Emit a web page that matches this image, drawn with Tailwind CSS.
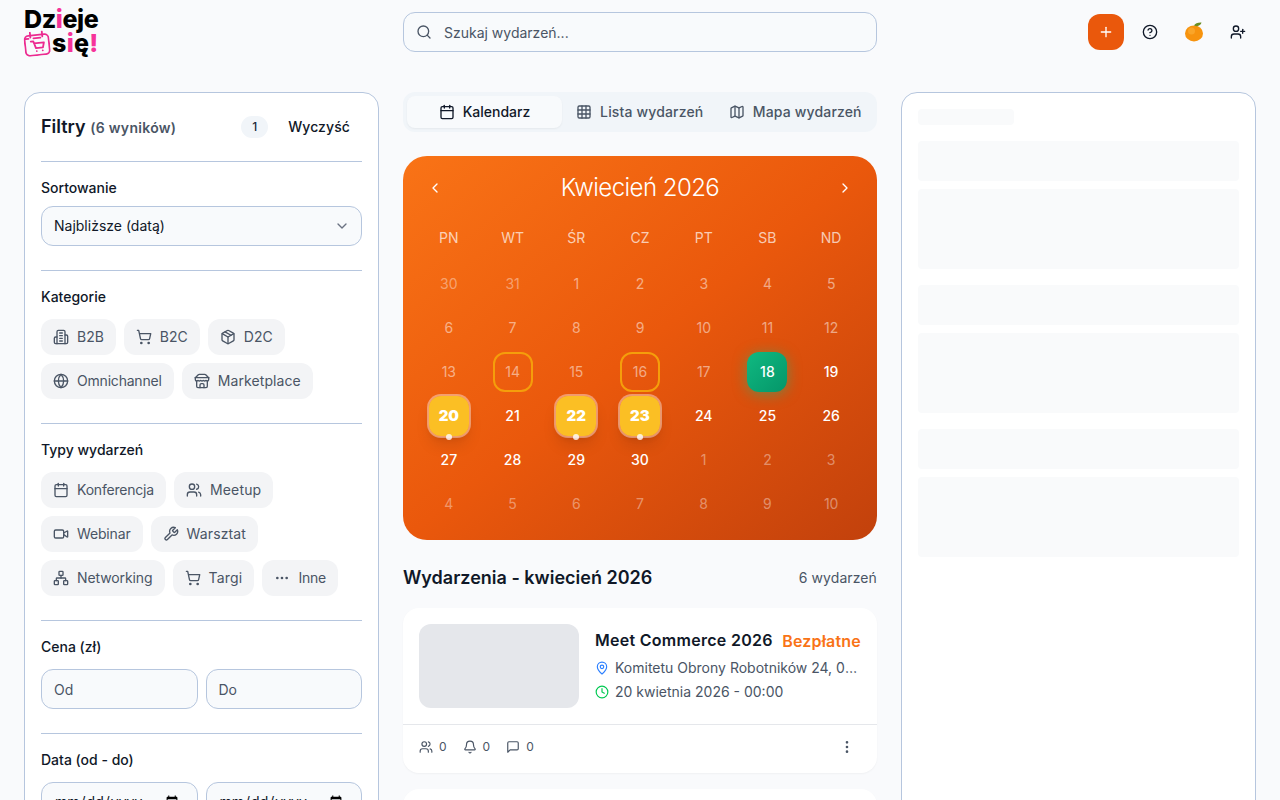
<!DOCTYPE html>
<html lang="pl">
<head>
    <meta charset="UTF-8">
    <meta name="viewport" content="width=device-width, initial-scale=1.0">
    <title>Dzieje się!</title>
    <script src="https://cdn.jsdelivr.net/npm/@tailwindcss/browser@4"></script>
</head>
<body class="h-screen overflow-hidden bg-[#f9fafc] font-['Inter',sans-serif] text-gray-900 antialiased">

    <!-- header -->
    <header class="grid grid-cols-[355px_474px_355px] gap-6 px-6 h-[64px]">
        <a class="flex flex-col pt-[8px] w-[76px]">
            <span class="text-[25px] leading-[22px] font-extrabold tracking-[-0.4px] text-black">Dz<span class="text-pink-500">i</span>eje</span>
            <span class="flex items-start gap-[2px] mt-[1px]">
                <svg class="w-[26px] h-[25px] -rotate-6" viewBox="0 0 26 25" fill="none" stroke="#ec2a90" stroke-width="1.8" stroke-linecap="round" stroke-linejoin="round"><rect x="1" y="4" width="24" height="20" rx="4"/><path d="M7 1v5M19 1v5M2 7h3M10 7h7"/><path d="M7 10h2.5l2 7h7l1.5-5H10M12 20h.01M18 20h.01"/></svg>
                <span class="text-[25px] leading-[24px] font-extrabold tracking-[0.3px] text-black">s<span class="text-pink-500">i</span>ę<span class="text-pink-500">!</span></span>
            </span>
        </a>
        <div class="pt-3">
            <div class="flex items-center gap-3 h-10 px-3 rounded-xl border border-[#b6c6de] bg-[#f8fafc]">
                <svg class="w-4 h-4 text-gray-600" viewBox="0 0 24 24" fill="none" stroke="currentColor" stroke-width="2" stroke-linecap="round" stroke-linejoin="round"><circle cx="11" cy="11" r="8"/><path d="m21 21-4.3-4.3"/></svg>
                <input class="flex-1 pt-[2px] bg-transparent text-sm outline-none placeholder:text-gray-600" placeholder="Szukaj wydarzeń...">
            </div>
        </div>
        <div class="flex items-start justify-end pt-[14px]">
            <button class="flex items-center justify-center w-9 h-9 rounded-xl bg-[#ea580c] text-white">
                <svg class="w-4 h-4" viewBox="0 0 24 24" fill="none" stroke="currentColor" stroke-width="2" stroke-linecap="round" stroke-linejoin="round"><path d="M5 12h14"/><path d="M12 5v14"/></svg>
            </button>
            <button class="flex items-center justify-center w-9 h-9 ml-2">
                <svg class="w-4 h-4" viewBox="0 0 24 24" fill="none" stroke="currentColor" stroke-width="2" stroke-linecap="round" stroke-linejoin="round"><circle cx="12" cy="12" r="10"/><path d="M9.09 9a3 3 0 0 1 5.83 1c0 2-3 3-3 3"/><path d="M12 17h.01"/></svg>
            </button>
            <button class="flex items-center justify-center w-9 h-9 ml-2">
                <svg class="w-5 h-5" viewBox="0 0 20 20"><ellipse cx="10" cy="11.4" rx="9" ry="8" fill="#f7930e"/><circle cx="7.5" cy="9" r="3.5" fill="#fbb03b" opacity=".6"/><path d="M10 3.6C11 1.4 14 .4 17.5 .6 16.8 3.6 13.8 5 10 3.6z" fill="#6b8e23"/></svg>
            </button>
            <button class="flex items-center justify-center w-9 h-9 ml-2">
                <svg class="w-4 h-4" viewBox="0 0 24 24" fill="none" stroke="currentColor" stroke-width="2" stroke-linecap="round" stroke-linejoin="round"><path d="M16 21v-2a4 4 0 0 0-4-4H6a4 4 0 0 0-4 4v2"/><circle cx="9" cy="7" r="4"/><path d="M19 8v6"/><path d="M22 11h-6"/></svg>
            </button>
        </div>
    </header>

    <main class="grid grid-cols-[355px_474px_355px] gap-6 px-6 pt-7 items-start">

        <!-- filters -->
        <aside class="bg-white rounded-2xl border border-[#b6c6de] px-4 pt-4 pb-6">
            <div class="flex items-center h-9">
                <h2 class="text-lg leading-7 font-semibold">Filtry <span class="text-sm font-semibold tracking-[0.3px] text-gray-600">(6 wyników)</span></h2>
                <span class="ml-auto flex items-center justify-center w-[27px] h-[22px] rounded-full bg-slate-100 text-xs font-medium text-gray-800">1</span>
                <button class="ml-2 px-3 text-sm font-medium tracking-[0.1px]">Wyczyść</button>
            </div>
            <div class="mt-4 border-t border-[#b6c6de] pt-4">
                <label class="block text-sm font-medium mb-2">Sortowanie</label>
                <div class="relative">
                    <select class="appearance-none w-full h-10 px-3 rounded-xl border border-[#b6c6de] bg-[#f8fafc] text-sm outline-none">
                        <option>Najbliższe (datą)</option>
                    </select>
                    <svg class="absolute right-3 top-3 w-4 h-4 text-gray-500" viewBox="0 0 24 24" fill="none" stroke="currentColor" stroke-width="2" stroke-linecap="round" stroke-linejoin="round"><path d="m6 9 6 6 6-6"/></svg>
                </div>
            </div>
            <div class="mt-6 border-t border-[#b6c6de] pt-4">
                <label class="block text-sm font-medium mb-3">Kategorie</label>
                <div class="flex flex-wrap gap-2">
                    <button class="flex items-center gap-2 h-9 px-3 rounded-xl bg-gray-100 text-sm text-gray-600">
                        <svg class="w-4 h-4" viewBox="0 0 24 24" fill="none" stroke="currentColor" stroke-width="2" stroke-linecap="round" stroke-linejoin="round"><path d="M6 22V4a2 2 0 0 1 2-2h8a2 2 0 0 1 2 2v18Z"/><path d="M6 12H4a2 2 0 0 0-2 2v6a2 2 0 0 0 2 2h2"/><path d="M18 9h2a2 2 0 0 1 2 2v9a2 2 0 0 1-2 2h-2"/><path d="M10 6h4"/><path d="M10 10h4"/><path d="M10 14h4"/><path d="M10 18h4"/></svg>
                        B2B
                    </button>
                    <button class="flex items-center gap-2 h-9 px-3 rounded-xl bg-gray-100 text-sm text-gray-600">
                        <svg class="w-4 h-4" viewBox="0 0 24 24" fill="none" stroke="currentColor" stroke-width="2" stroke-linecap="round" stroke-linejoin="round"><circle cx="8" cy="21" r="1"/><circle cx="19" cy="21" r="1"/><path d="M2.05 2.05h2l2.66 12.42a2 2 0 0 0 2 1.58h9.78a2 2 0 0 0 1.95-1.57l1.65-7.43H5.12"/></svg>
                        B2C
                    </button>
                    <button class="flex items-center gap-2 h-9 px-3 rounded-xl bg-gray-100 text-sm text-gray-600">
                        <svg class="w-4 h-4" viewBox="0 0 24 24" fill="none" stroke="currentColor" stroke-width="2" stroke-linecap="round" stroke-linejoin="round"><path d="M11 21.73a2 2 0 0 0 2 0l7-4A2 2 0 0 0 21 16V8a2 2 0 0 0-1-1.73l-7-4a2 2 0 0 0-2 0l-7 4A2 2 0 0 0 3 8v8a2 2 0 0 0 1 1.73z"/><path d="M12 22V12"/><path d="M3.29 7 12 12l8.71-5"/><path d="m7.5 4.27 9 5.15"/></svg>
                        D2C
                    </button>
                    <button class="flex items-center gap-2 h-9 px-3 rounded-xl bg-gray-100 text-sm tracking-[-0.2px] text-gray-600">
                        <svg class="w-4 h-4" viewBox="0 0 24 24" fill="none" stroke="currentColor" stroke-width="2" stroke-linecap="round" stroke-linejoin="round"><circle cx="12" cy="12" r="10"/><path d="M12 2a14.5 14.5 0 0 0 0 20 14.5 14.5 0 0 0 0-20"/><path d="M2 12h20"/></svg>
                        Omnichannel
                    </button>
                    <button class="flex items-center gap-2 h-9 px-3 rounded-xl bg-gray-100 text-sm tracking-[0.1px] text-gray-600">
                        <svg class="w-4 h-4" viewBox="0 0 24 24" fill="none" stroke="currentColor" stroke-width="2" stroke-linecap="round" stroke-linejoin="round"><path d="m2 7 4.41-4.41A2 2 0 0 1 7.83 2h8.34a2 2 0 0 1 1.42.59L22 7"/><path d="M4 12v8a2 2 0 0 0 2 2h12a2 2 0 0 0 2-2v-8"/><path d="M15 22v-4a2 2 0 0 0-2-2h-2a2 2 0 0 0-2 2v4"/><path d="M2 7h20"/><path d="M22 7v3a2 2 0 0 1-2 2a2.7 2.7 0 0 1-1.59-.63.7.7 0 0 0-.82 0A2.7 2.7 0 0 1 16 12a2.7 2.7 0 0 1-1.59-.63.7.7 0 0 0-.82 0A2.7 2.7 0 0 1 12 12a2.7 2.7 0 0 1-1.59-.63.7.7 0 0 0-.82 0A2.7 2.7 0 0 1 8 12a2.7 2.7 0 0 1-1.59-.63.7.7 0 0 0-.82 0A2.7 2.7 0 0 1 4 12a2 2 0 0 1-2-2V7"/></svg>
                        Marketplace
                    </button>
                </div>
            </div>
            <div class="mt-6 border-t border-[#b6c6de] pt-4">
                <label class="block text-sm font-medium mb-3">Typy wydarzeń</label>
                <div class="flex flex-wrap gap-2">
                    <button class="flex items-center gap-2 h-9 px-3 rounded-xl bg-gray-100 text-sm tracking-[-0.2px] text-gray-600">
                        <svg class="w-4 h-4" viewBox="0 0 24 24" fill="none" stroke="currentColor" stroke-width="2" stroke-linecap="round" stroke-linejoin="round"><path d="M8 2v4"/><path d="M16 2v4"/><rect x="3" y="4" width="18" height="18" rx="2"/><path d="M3 10h18"/></svg>
                        Konferencja
                    </button>
                    <button class="flex items-center gap-2 h-9 px-3 rounded-xl bg-gray-100 text-sm tracking-[0.15px] text-gray-600">
                        <svg class="w-4 h-4" viewBox="0 0 24 24" fill="none" stroke="currentColor" stroke-width="2" stroke-linecap="round" stroke-linejoin="round"><path d="M16 21v-2a4 4 0 0 0-4-4H6a4 4 0 0 0-4 4v2"/><circle cx="9" cy="7" r="4"/><path d="M22 21v-2a4 4 0 0 0-3-3.87"/><path d="M16 3.13a4 4 0 0 1 0 7.75"/></svg>
                        Meetup
                    </button>
                    <button class="flex items-center gap-2 h-9 px-3 rounded-xl bg-gray-100 text-sm tracking-[-0.15px] text-gray-600">
                        <svg class="w-4 h-4" viewBox="0 0 24 24" fill="none" stroke="currentColor" stroke-width="2" stroke-linecap="round" stroke-linejoin="round"><path d="m16 13 5.223 3.482a.5.5 0 0 0 .777-.416V7.87a.5.5 0 0 0-.752-.432L16 10.5"/><rect x="2" y="6" width="14" height="12" rx="2"/></svg>
                        Webinar
                    </button>
                    <button class="flex items-center gap-2 h-9 px-3 rounded-xl bg-gray-100 text-sm tracking-[0.12px] text-gray-600">
                        <svg class="w-4 h-4" viewBox="0 0 24 24" fill="none" stroke="currentColor" stroke-width="2" stroke-linecap="round" stroke-linejoin="round"><path d="M14.7 6.3a1 1 0 0 0 0 1.4l1.6 1.6a1 1 0 0 0 1.4 0l3.77-3.77a6 6 0 0 1-7.94 7.94l-6.91 6.91a2.12 2.12 0 0 1-3-3l6.91-6.91a6 6 0 0 1 7.94-7.94l-3.76 3.76z"/></svg>
                        Warsztat
                    </button>
                    <button class="flex items-center gap-2 h-9 px-3 rounded-xl bg-gray-100 text-sm tracking-[-0.1px] text-gray-600">
                        <svg class="w-4 h-4" viewBox="0 0 24 24" fill="none" stroke="currentColor" stroke-width="2" stroke-linecap="round" stroke-linejoin="round"><rect x="16" y="16" width="6" height="6" rx="1"/><rect x="2" y="16" width="6" height="6" rx="1"/><rect x="9" y="2" width="6" height="6" rx="1"/><path d="M5 16v-3a1 1 0 0 1 1-1h12a1 1 0 0 1 1 1v3"/><path d="M12 12V8"/></svg>
                        Networking
                    </button>
                    <button class="flex items-center gap-2 h-9 px-3 rounded-xl bg-gray-100 text-sm tracking-[0.2px] text-gray-600">
                        <svg class="w-4 h-4" viewBox="0 0 24 24" fill="none" stroke="currentColor" stroke-width="2" stroke-linecap="round" stroke-linejoin="round"><circle cx="8" cy="21" r="1"/><circle cx="19" cy="21" r="1"/><path d="M2.05 2.05h2l2.66 12.42a2 2 0 0 0 2 1.58h9.78a2 2 0 0 0 1.95-1.57l1.65-7.43H5.12"/></svg>
                        Targi
                    </button>
                    <button class="flex items-center gap-2 h-9 px-3 rounded-xl bg-gray-100 text-sm tracking-[-0.25px] text-gray-600">
                        <svg class="w-4 h-4" viewBox="0 0 24 24" fill="none" stroke="currentColor" stroke-width="2" stroke-linecap="round" stroke-linejoin="round"><circle cx="12" cy="12" r="1"/><circle cx="19" cy="12" r="1"/><circle cx="5" cy="12" r="1"/></svg>
                        Inne
                    </button>
                </div>
            </div>
            <div class="mt-6 border-t border-[#b6c6de] pt-4">
                <label class="block text-sm font-medium mb-3">Cena (zł)</label>
                <div class="grid grid-cols-2 gap-2">
                    <input class="w-full h-10 px-3 rounded-xl border border-[#b6c6de] bg-[#f8fafc] text-sm outline-none placeholder:text-gray-600" placeholder="Od">
                    <input class="w-full h-10 px-3 rounded-xl border border-[#b6c6de] bg-[#f8fafc] text-sm outline-none placeholder:text-gray-600" placeholder="Do">
                </div>
            </div>
            <div class="mt-6 border-t border-[#b6c6de] pt-4">
                <label class="block text-sm font-medium mb-3">Data (od - do)</label>
                <div class="grid grid-cols-2 gap-2">
                    <input type="date" class="w-full h-10 pl-3 pr-4 rounded-xl border border-[#b6c6de] bg-[#f8fafc] text-sm outline-none">
                    <input type="date" class="w-full h-10 pl-3 pr-4 rounded-xl border border-[#b6c6de] bg-[#f8fafc] text-sm outline-none">
                </div>
            </div>
        </aside>

        <!-- calendar and events -->
        <section>
            <div class="grid grid-cols-[155px_1fr_1fr] items-center h-10 p-1 rounded-xl bg-slate-100">
                <button class="flex items-center justify-center gap-2 h-8 rounded-lg bg-[#f8fafc] shadow-[0_1px_2px_rgba(0,0,0,0.05)] text-sm font-medium">
                    <svg class="w-4 h-4" viewBox="0 0 24 24" fill="none" stroke="currentColor" stroke-width="2" stroke-linecap="round" stroke-linejoin="round"><path d="M8 2v4"/><path d="M16 2v4"/><rect x="3" y="4" width="18" height="18" rx="2"/><path d="M3 10h18"/></svg>
                    Kalendarz
                </button>
                <button class="flex items-center justify-center gap-2 h-8 text-sm font-medium tracking-[0.15px] text-gray-600">
                    <svg class="w-4 h-4" viewBox="0 0 24 24" fill="none" stroke="currentColor" stroke-width="2" stroke-linecap="round" stroke-linejoin="round"><rect x="3" y="3" width="18" height="18" rx="2"/><path d="M3 9h18"/><path d="M3 15h18"/><path d="M9 3v18"/><path d="M15 3v18"/></svg>
                    Lista wydarzeń
                </button>
                <button class="flex items-center justify-center gap-2 h-8 text-sm font-medium tracking-[0.15px] text-gray-600">
                    <svg class="w-4 h-4" viewBox="0 0 24 24" fill="none" stroke="currentColor" stroke-width="2" stroke-linecap="round" stroke-linejoin="round"><path d="M14.106 5.553a2 2 0 0 0 1.788 0l3.659-1.83A1 1 0 0 1 21 4.619v12.764a1 1 0 0 1-.553.894l-4.553 2.277a2 2 0 0 1-1.788 0l-4.212-2.106a2 2 0 0 0-1.788 0l-3.659 1.83A1 1 0 0 1 3 19.381V6.618a1 1 0 0 1 .553-.894l4.553-2.277a2 2 0 0 1 1.788 0z"/><path d="M15 5.764v15"/><path d="M9 3.236v15"/></svg>
                    Mapa wydarzeń
                </button>
            </div>

            <div class="mt-6 h-[384px] rounded-3xl bg-gradient-to-br from-[#f97316] via-[#ea580c] to-[#c2410c] px-3.5 pt-4 text-white">
                <div class="flex items-center justify-between h-8 px-2.5 mb-6">
                    <svg class="w-4 h-4" viewBox="0 0 24 24" fill="none" stroke="currentColor" stroke-width="2" stroke-linecap="round" stroke-linejoin="round"><path d="m15 18-6-6 6-6"/></svg>
                    <span class="text-2xl leading-8 font-light tracking-[-0.55px]">Kwiecień 2026</span>
                    <svg class="w-4 h-4" viewBox="0 0 24 24" fill="none" stroke="currentColor" stroke-width="2" stroke-linecap="round" stroke-linejoin="round"><path d="m9 18 6-6-6-6"/></svg>
                </div>
                <div class="grid grid-cols-7 mb-4 text-sm leading-5 text-center text-white/70">
                    <span>PN</span><span>WT</span><span>ŚR</span><span>CZ</span><span>PT</span><span>SB</span><span>ND</span>
                </div>
                <div class="grid grid-cols-7 gap-y-1 text-sm justify-items-center">
                    <div class="flex items-center justify-center w-10 h-10 text-white/40">30</div>
                    <div class="flex items-center justify-center w-10 h-10 text-white/40">31</div>
                    <div class="flex items-center justify-center w-10 h-10 text-white/50">1</div>
                    <div class="flex items-center justify-center w-10 h-10 text-white/50">2</div>
                    <div class="flex items-center justify-center w-10 h-10 text-white/50">3</div>
                    <div class="flex items-center justify-center w-10 h-10 text-white/50">4</div>
                    <div class="flex items-center justify-center w-10 h-10 text-white/50">5</div>

                    <div class="flex items-center justify-center w-10 h-10 text-white/50">6</div>
                    <div class="flex items-center justify-center w-10 h-10 text-white/50">7</div>
                    <div class="flex items-center justify-center w-10 h-10 text-white/50">8</div>
                    <div class="flex items-center justify-center w-10 h-10 text-white/50">9</div>
                    <div class="flex items-center justify-center w-10 h-10 text-white/50">10</div>
                    <div class="flex items-center justify-center w-10 h-10 text-white/50">11</div>
                    <div class="flex items-center justify-center w-10 h-10 text-white/50">12</div>

                    <div class="flex items-center justify-center w-10 h-10 text-white/50">13</div>
                    <div class="flex items-center justify-center w-10 h-10 rounded-xl border-2 border-[#f59e0b] text-white/50">14</div>
                    <div class="flex items-center justify-center w-10 h-10 text-white/50">15</div>
                    <div class="flex items-center justify-center w-10 h-10 rounded-xl border-2 border-[#f59e0b] text-white/50">16</div>
                    <div class="flex items-center justify-center w-10 h-10 text-white/50">17</div>
                    <div class="flex items-center justify-center w-10 h-10 rounded-xl bg-gradient-to-br from-[#10b981] to-[#059669] font-medium shadow-[0_2px_14px_rgba(16,185,129,0.5)]">18</div>
                    <div class="flex items-center justify-center w-10 h-10 font-medium">19</div>

                    <div class="relative flex items-center justify-center w-11 h-11 -my-0.5 rounded-[14px] border-2 border-white/40 bg-[#fbbf24] bg-clip-padding font-black text-[15px] shadow-lg">20<span class="absolute -bottom-[4px] left-1/2 -ml-[3px] w-1.5 h-1.5 rounded-full bg-white/80"></span></div>
                    <div class="flex items-center justify-center w-10 h-10 font-medium">21</div>
                    <div class="relative flex items-center justify-center w-11 h-11 -my-0.5 rounded-[14px] border-2 border-white/40 bg-[#fbbf24] bg-clip-padding font-black text-[15px] shadow-lg">22<span class="absolute -bottom-[4px] left-1/2 -ml-[3px] w-1.5 h-1.5 rounded-full bg-white/80"></span></div>
                    <div class="relative flex items-center justify-center w-11 h-11 -my-0.5 rounded-[14px] border-2 border-white/40 bg-[#fbbf24] bg-clip-padding font-black text-[15px] shadow-lg">23<span class="absolute -bottom-[4px] left-1/2 -ml-[3px] w-1.5 h-1.5 rounded-full bg-white/80"></span></div>
                    <div class="flex items-center justify-center w-10 h-10 font-medium">24</div>
                    <div class="flex items-center justify-center w-10 h-10 font-medium">25</div>
                    <div class="flex items-center justify-center w-10 h-10 font-medium">26</div>

                    <div class="flex items-center justify-center w-10 h-10 font-medium">27</div>
                    <div class="flex items-center justify-center w-10 h-10 font-medium">28</div>
                    <div class="flex items-center justify-center w-10 h-10 font-medium">29</div>
                    <div class="flex items-center justify-center w-10 h-10 font-medium">30</div>
                    <div class="flex items-center justify-center w-10 h-10 text-white/40">1</div>
                    <div class="flex items-center justify-center w-10 h-10 text-white/40">2</div>
                    <div class="flex items-center justify-center w-10 h-10 text-white/40">3</div>

                    <div class="flex items-center justify-center w-10 h-10 text-white/40">4</div>
                    <div class="flex items-center justify-center w-10 h-10 text-white/40">5</div>
                    <div class="flex items-center justify-center w-10 h-10 text-white/40">6</div>
                    <div class="flex items-center justify-center w-10 h-10 text-white/40">7</div>
                    <div class="flex items-center justify-center w-10 h-10 text-white/40">8</div>
                    <div class="flex items-center justify-center w-10 h-10 text-white/40">9</div>
                    <div class="flex items-center justify-center w-10 h-10 text-white/40">10</div>
                </div>
            </div>

            <div class="flex items-center justify-between mt-6 h-[28px]">
                <h2 class="text-lg font-semibold">Wydarzenia - kwiecień 2026</h2>
                <span class="text-sm tracking-[0.1px] text-gray-600">6 wydarzeń</span>
            </div>

            <article class="mt-4 h-[165px] rounded-2xl bg-white shadow-[0_1px_2px_rgba(0,0,0,0.04)]">
                <div class="flex gap-4 p-4 h-[117px] border-b border-gray-200">
                    <div class="w-40 h-[84px] shrink-0 rounded-xl bg-gray-200"></div>
                    <div class="flex-1 min-w-0">
                        <div class="flex items-center justify-between h-8 gap-2">
                            <h3 class="font-semibold tracking-[0.28px] whitespace-nowrap">Meet Commerce 2026</h3>
                            <span class="mt-0.5 font-semibold tracking-[0.2px] text-[#f97316] whitespace-nowrap">Bezpłatne</span>
                        </div>
                        <div class="flex items-center gap-1.5 mt-0.5 h-5 text-sm text-gray-600">
                            <svg class="w-[14px] h-[14px] shrink-0 text-blue-500" viewBox="0 0 24 24" fill="none" stroke="currentColor" stroke-width="2" stroke-linecap="round" stroke-linejoin="round"><path d="M20 10c0 4.993-5.539 10.193-7.399 11.799a1 1 0 0 1-1.202 0C9.539 20.193 4 14.993 4 10a8 8 0 0 1 16 0"/><circle cx="12" cy="10" r="3"/></svg>
                            <span class="truncate">Komitetu Obrony Robotników 24, 02-148 Warszawa</span>
                        </div>
                        <div class="flex items-center gap-1.5 mt-1 h-5 text-sm text-gray-600">
                            <svg class="w-[14px] h-[14px] shrink-0 text-green-500" viewBox="0 0 24 24" fill="none" stroke="currentColor" stroke-width="2" stroke-linecap="round" stroke-linejoin="round"><circle cx="12" cy="12" r="10"/><path d="M12 6v6l4 2"/></svg>
                            20 kwietnia 2026 - 00:00
                        </div>
                    </div>
                </div>
                <div class="flex items-center h-[44px] px-4 text-xs text-gray-600">
                    <svg class="w-[14px] h-[14px]" viewBox="0 0 24 24" fill="none" stroke="currentColor" stroke-width="2" stroke-linecap="round" stroke-linejoin="round"><path d="M16 21v-2a4 4 0 0 0-4-4H6a4 4 0 0 0-4 4v2"/><circle cx="9" cy="7" r="4"/><path d="M22 21v-2a4 4 0 0 0-3-3.87"/><path d="M16 3.13a4 4 0 0 1 0 7.75"/></svg>
                    <span class="ml-1.5">0</span>
                    <svg class="ml-4 w-[14px] h-[14px]" viewBox="0 0 24 24" fill="none" stroke="currentColor" stroke-width="2" stroke-linecap="round" stroke-linejoin="round"><path d="M10.268 21a2 2 0 0 0 3.464 0"/><path d="M3.262 15.326A1 1 0 0 0 4 17h16a1 1 0 0 0 .74-1.673C19.41 13.956 18 12.499 18 8A6 6 0 0 0 6 8c0 4.499-1.411 5.956-2.738 7.326"/></svg>
                    <span class="ml-1.5">0</span>
                    <svg class="ml-4 w-[14px] h-[14px]" viewBox="0 0 24 24" fill="none" stroke="currentColor" stroke-width="2" stroke-linecap="round" stroke-linejoin="round"><path d="M21 15a2 2 0 0 1-2 2H7l-4 4V5a2 2 0 0 1 2-2h14a2 2 0 0 1 2 2z"/></svg>
                    <span class="ml-1.5">0</span>
                    <svg class="ml-auto mr-[6px] w-4 h-4" viewBox="0 0 24 24" fill="none" stroke="currentColor" stroke-width="2" stroke-linecap="round" stroke-linejoin="round"><circle cx="12" cy="12" r="1"/><circle cx="12" cy="5" r="1"/><circle cx="12" cy="19" r="1"/></svg>
                </div>
            </article>
            <article class="mt-4 h-[165px] rounded-2xl bg-white shadow-[0_1px_2px_rgba(0,0,0,0.04)]"></article>
        </section>

        <!-- right sidebar, still loading -->
        <aside class="h-[800px] bg-white rounded-2xl border border-[#b6c6de] p-4">
            <div class="w-24 h-4 rounded bg-gray-50"></div>
            <div class="mt-4 h-10 rounded bg-gray-50"></div>
            <div class="mt-2 h-20 rounded bg-gray-50"></div>
            <div class="mt-4 h-10 rounded bg-gray-50"></div>
            <div class="mt-2 h-20 rounded bg-gray-50"></div>
            <div class="mt-4 h-10 rounded bg-gray-50"></div>
            <div class="mt-2 h-20 rounded bg-gray-50"></div>
        </aside>
    </main>
</body>
</html>
